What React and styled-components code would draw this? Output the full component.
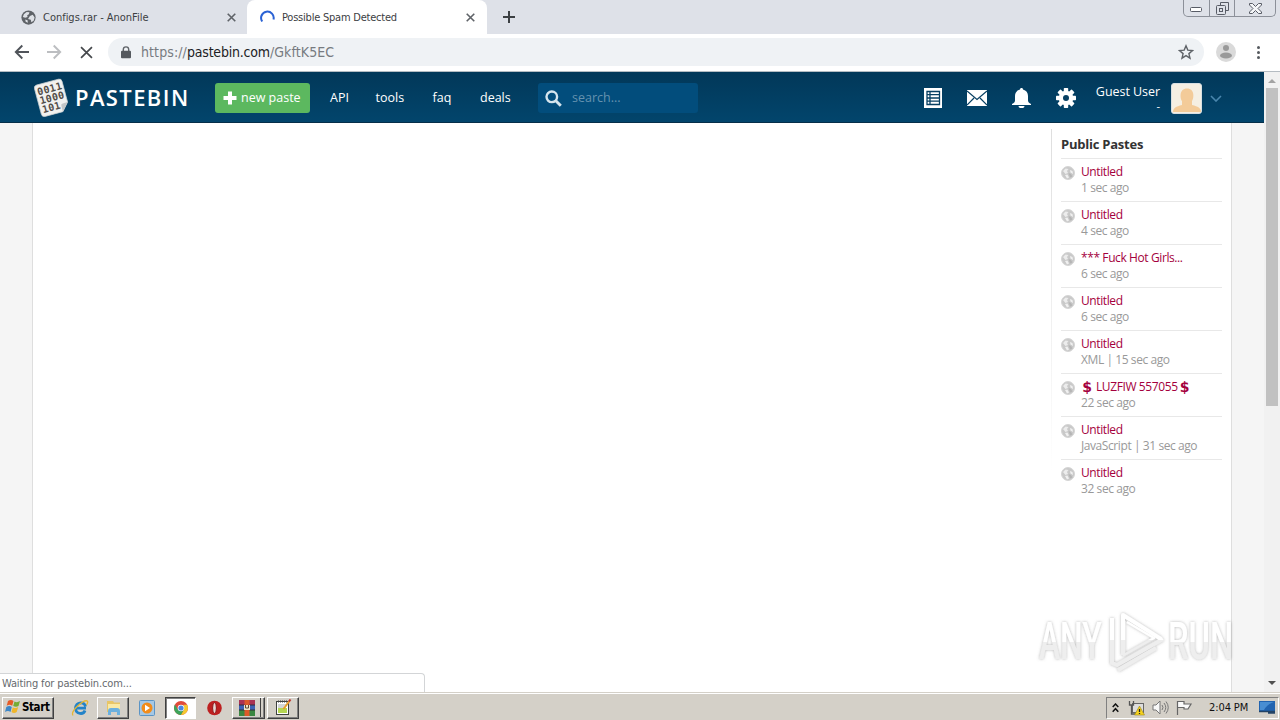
import React from 'react';
import styled, { createGlobalStyle } from 'styled-components';

const pastes = [
  { title: 'Untitled', info: '1 sec ago' },
  { title: 'Untitled', info: '4 sec ago' },
  { title: '*** Fuck Hot Girls...', info: '6 sec ago' },
  { title: 'Untitled', info: '6 sec ago' },
  { title: 'Untitled', info: 'XML | 15 sec ago' },
  { title: 'LUZFIW 557055', info: '22 sec ago', money: true },
  { title: 'Untitled', info: 'JavaScript | 31 sec ago' },
  { title: 'Untitled', info: '32 sec ago' },
];

const Globe = ({ size, color, land }) => (
  <svg width={size} height={size} viewBox="0 0 16 16">
    <circle cx="8" cy="8" r="7.6" fill={color} />
    <path d="M3 4.5 6 2l3 .4-.6 2L6.600 5.500l.4 2-2.500.8L2 7.500zM9.500 6.500l3-1.500 2 3-1 3.500-2.500 1.500-.5-2.500-3-1zM4.500 10l2.500 1 .3 2.600L5 12.600z" fill={land} />
  </svg>
);

const PublicGlobe = () => (
  <svg width="14" height="14" viewBox="0 0 14 14">
    <circle cx="7" cy="7" r="6.500" fill="#c9c9c9" stroke="#d6d6d6" />
    <path d="M2 5 4.500 2.500l3 .5L6 5l1 2-2.500 1z" fill="#ececec" />
    <path d="m4 9 2.500-.5 1.500 3-2 1zM9 4l2.500 1 .5 3-2.500-1.500z" fill="#f0f0f0" />
    <path d="m7.500 7 2.500 1 1.500 2.500-2.500 1z" fill="#b5b5b5" />
  </svg>
);

const CloseIcon = ({ size = 9, width = 1.8, color = '#5f6368' }) => (
  <svg width={size} height={size} viewBox="0 0 10 10">
    <path d="M.8.8 9.200 9.200M9.200.8.8 9.200" stroke={color} strokeWidth={width} />
  </svg>
);

const Logo = () => (
  <svg width="36" height="40" viewBox="0 0 36 40">
    <g transform="rotate(-15 18 20)">
      <path d="M6.500 3.500h22.500a3 3 0 0 1 3 3v21.500l-7 8H6.500a3 3 0 0 1-3-3V6.500a3 3 0 0 1 3-3z" fill="#f1f1ef" stroke="#c9d0d3" strokeWidth=".7" />
      <path d="m32 28-7 8v-6a2 2 0 0 1 2-2z" fill="#c3c6c7" />
      <g fontFamily="DejaVu Sans Mono, monospace" fontWeight="700" fontSize="10" fill="#514c47">
        <text x="5.500" y="14" textLength="25">0011</text>
        <text x="5.500" y="23.200" textLength="25">1000</text>
        <text x="5.500" y="32.400" textLength="18.500">101</text>
      </g>
    </g>
  </svg>
);

const Watermark = () => (
  <svg width="200" height="68" viewBox="0 0 200 68">
    <defs>
      <linearGradient id="mark" gradientUnits="userSpaceOnUse" x1="0" y1="0" x2="0" y2="68">
        <stop offset=".48" stopColor="#fff" />
        <stop offset=".48" stopColor="#eee" />
      </linearGradient>
      <linearGradient id="letters" x1="0" y1="0" x2="0" y2="1">
        <stop offset=".53" stopColor="#fff" />
        <stop offset=".53" stopColor="#eee" />
      </linearGradient>
      <filter id="glow" x="-10%" y="-10%" width="120%" height="120%">
        <feDropShadow dx="0" dy="0" stdDeviation="1.600" floodColor="#777" floodOpacity=".55" />
      </filter>
    </defs>
    <g filter="url(#glow)">
      <g fill="url(#letters)" fontFamily="Roboto, sans-serif" fontWeight="500" fontSize="51">
        <text transform="translate(3 51.500) scale(.64 1)" textLength="98" lengthAdjust="spacingAndGlyphs">ANY</text>
        <text transform="translate(132 51.500) scale(.64 1)" textLength="102" lengthAdjust="spacingAndGlyphs">RUN</text>
      </g>
      <g fill="none" stroke="url(#mark)" strokeWidth="4" strokeLinejoin="round">
        <path d="M87 48V8l38 24" />
        <path d="M76 11v45l5 2 46-26" />
        <path d="M88 14v34l30-17L91 15" strokeWidth="2.500" />
        <path d="m82 63 38-22" />
      </g>
    </g>
  </svg>
);

const App = () => (
  <Screen>
    <GlobalStyle />
    <TabStrip>
      <Tab $width={247}>
        <Globe size={15} color="#5f6368" land="#dee1e6" />
        <TabTitle $spacing="-0.02px">Configs.rar - AnonFile</TabTitle>
        <CloseIcon />
      </Tab>
      <Tab $width={240} $active>
        <svg width="15" height="15" viewBox="0 0 15 15">
          <path d="M2.200 11.500A6.300 6.300 0 1 1 13.500 9.500" fill="none" stroke="#2a62d4" strokeWidth="2" />
        </svg>
        <TabTitle $spacing="-0.22px">Possible Spam Detected</TabTitle>
        <CloseIcon />
      </Tab>
      <NewTab>
        <svg width="12" height="12" viewBox="0 0 12 12"><path d="M6 0v12M0 6h12" stroke="#3c4043" strokeWidth="2" /></svg>
      </NewTab>
      <WindowControls>
        <ControlButton $width={25}>
          <svg width="13" height="6"><rect x=".5" y=".5" width="11" height="4" rx="1" fill="#fff" stroke="#585c66" /></svg>
        </ControlButton>
        <ControlButton $width={25}>
          <svg width="13" height="13" fill="none" stroke="#585c66"><path d="M4.500 3.500v-3h8v8h-3" /><rect x=".5" y="3.500" width="9" height="9" rx="1" /><rect x="3.500" y="6.500" width="3" height="3" /></svg>
        </ControlButton>
        <ControlButton $width={41}>
          <svg width="13" height="11" viewBox="0 0 13 11"><path d="M.5.5h3l3 3 3-3h3v1.500L9 5.500l3.500 3.500v1.500h-3l-3-3-3 3h-3V9L4 5.500.5 2z" fill="#f5f6f8" stroke="#585c66" /></svg>
        </ControlButton>
      </WindowControls>
    </TabStrip>

    <Toolbar>
      <ToolIcon>
        <svg width="16" height="16" viewBox="0 0 16 16" fill="none" stroke="#50545a" strokeWidth="1.900"><path d="M15 8H2M8.300 1.500 1.800 8l6.500 6.500" /></svg>
      </ToolIcon>
      <ToolIcon>
        <svg width="16" height="16" viewBox="0 0 16 16" fill="none" stroke="#bcbec1" strokeWidth="1.900"><path d="M1 8h13M7.700 1.500 14.200 8l-6.500 6.500" /></svg>
      </ToolIcon>
      <ToolIcon><CloseIcon size={13} width={1.3} color="#45484c" /></ToolIcon>
      <AddressBar>
        <svg width="10" height="13" viewBox="0 0 10 13"><path d="M2.300 6V3.600a2.700 2.700 0 0 1 5.400 0V6" fill="none" stroke="#5f6368" strokeWidth="1.400" /><rect y="4.700" width="10" height="7.600" rx="1" fill="#55595e" /></svg>
        <Url>https://<b>pastebin.com</b>/GkftK5EC</Url>
        <svg width="16" height="16" viewBox="0 0 16 16"><path d="m8 1.800 1.800 4.300 4.700.4-3.600 3.100L12 14.200l-4-2.500-4 2.500 1.100-4.600-3.600-3.100 4.700-.4z" fill="none" stroke="#5f6368" strokeWidth="1.400" /></svg>
      </AddressBar>
      <svg width="20" height="20" viewBox="0 0 20 20"><circle cx="10" cy="10" r="10" fill="#dadada" /><circle cx="10" cy="6" r="3" fill="#999" /><ellipse cx="10" cy="13.500" rx="6" ry="3" fill="#999" /></svg>
      <Dots><i /><i /><i /></Dots>
    </Toolbar>

    <Viewport>
      <Page>
        <SiteHeader>
          <Logo />
          <Brand>PASTEBIN</Brand>
          <NewPaste>
            <svg width="14" height="14" viewBox="0 0 14 14"><path d="M7 .5v13M.5 7h13" stroke="#fff" strokeWidth="4" /></svg>
            new paste
          </NewPaste>
          <NavLink $width={45.5}>API</NavLink>
          <NavLink $width={57}>tools</NavLink>
          <NavLink $width={47.5}>faq</NavLink>
          <NavLink $width={58}>deals</NavLink>
          <Search>
            <svg width="17" height="17" viewBox="0 0 17 17" fill="none" stroke="#d5e5ee"><circle cx="6.800" cy="6.800" r="5.300" strokeWidth="2.400" /><path d="m10.800 10.800 5 5" strokeWidth="2.900" /></svg>
            search...
          </Search>
          <HeaderIcons>
            <svg width="18" height="20" viewBox="0 0 18 20"><path d="M0 0h18v20H0z" fill="#fff" /><path d="M3 3.500h12.500v13H3zM3 6.700h12.500M3 10h12.500M3 13.200h12.500M6 3.500v13" fill="none" stroke="#073f62" strokeWidth="1.300" /></svg>
            <svg width="20" height="16" viewBox="0 0 20 16"><path d="M0 0h20v16H0z" fill="#fff" /><path d="m0 1 10 8.500L20 1M0 15l7-7M20 15l-7-7" fill="none" stroke="#073f62" strokeWidth="1.200" /></svg>
            <svg width="19" height="20" viewBox="0 0 19 20"><path d="M9.500 0c1 0 1.500.7 1.500 1.600 3.200.8 5 3.300 5 6.400v4.500c0 1.500 1 2.500 3 3.500v1H0v-1c2-1 3-2 3-3.500V8c0-3.100 1.800-5.600 5-6.400C8 .7 8.500 0 9.500 0zM6.500 18h6a3 2.200 0 0 1-6 0z" fill="#fff" /></svg>
            <svg width="20" height="20" viewBox="-10 -10 20 20" fill="#fff">
              {[0, 45, 90, 135].map((angle) => <rect key={angle} x="-2.200" y="-10" width="4.400" height="20" rx=".7" transform={`rotate(${angle})`} />)}
              <circle r="7.300" />
              <circle r="3" fill="#073f62" />
            </svg>
          </HeaderIcons>
          <User><span>Guest User</span><small>-</small></User>
          <Avatar>
            <svg width="28" height="28" viewBox="0 0 28 28"><path d="M0 28c0-4 3-5.500 9-7V17C7 14.500 6 4.500 14 4.500s7 10 5 12.500v4C25 22.500 28 24 28 28z" fill="#f3cb99" /></svg>
          </Avatar>
          <svg width="12" height="7" viewBox="0 0 12 7"><path d="m1 1 5 5 5-5" fill="none" stroke="#4a86ad" strokeWidth="1.600" /></svg>
        </SiteHeader>
        <Content>
          <Sidebar>
            <SidebarTitle>Public Pastes</SidebarTitle>
            {pastes.map((paste, i) => (
              <Paste key={i}>
                <PublicGlobe />
                <div>
                  <PasteTitle>
                    {paste.money && <Money>$</Money>}{paste.title}{paste.money && <Money $after>$</Money>}
                  </PasteTitle>
                  <PasteInfo>{paste.info}</PasteInfo>
                </div>
              </Paste>
            ))}
          </Sidebar>
        </Content>
      </Page>
      <Scrollbar>
        <Arrow $color="#a3a3a3" $up />
        <Thumb />
        <Arrow $color="#505050" />
      </Scrollbar>
      <Status>Waiting for pastebin.com...</Status>
      <WatermarkBox><Watermark /></WatermarkBox>
    </Viewport>

    <Taskbar>
      <Start>
        <svg width="16" height="15" viewBox="0 0 16 15"><path d="M3 2q3-2 5.500 0L7.200 6.700Q4.500 5 1.700 6.700z" fill="#e65b26" /><path d="M9.500 2.500Q12 4 15 2l-1.500 5Q11 8.500 8.200 7z" fill="#75ac35" /><path d="M1.300 8q3-2 5.500 0l-1.300 5Q3 11.200 0 13z" fill="#3c87c8" /><path d="M7.800 8.200Q10.500 10 13.200 8l-1.500 5Q9 14.800 6.500 13z" fill="#efb62b" /></svg>
        Start
      </Start>
      <TaskButton $width={32} $left={10} $flat>
        <svg width="18" height="18" viewBox="0 0 18 18" fill="none"><path d="M14.500 7.500C14 2.500 5 2.500 4.500 9.500c.5 6 8 6.500 9.500 2M5 9.200h10" stroke="#2383c8" strokeWidth="2.800" /><path d="M2 16.500C-1 12 12 1 16 1.800c1.200.5.7 2.200-.5 4" stroke="#e5b634" strokeWidth="1.300" /></svg>
      </TaskButton>
      <TaskButton $width={32} $left={1}>
        <svg width="17" height="17" viewBox="0 0 17 17"><path d="M2 2h6l1 1.500h6V13H2z" fill="#e8c565" /><path d="M3 5h12v7H3z" fill="#fae9a5" /><path d="M3 16v-4q0-3 3-3h6q3 0 3 3v4h-3v-3H6v3z" fill="#6bb0df" /></svg>
      </TaskButton>
      <TaskButton $width={32} $left={2} $flat>
        <svg width="16" height="16" viewBox="0 0 16 16"><rect x=".5" y=".5" width="15" height="15" rx="1" fill="#a5c8e5" stroke="#5b94c5" /><circle cx="8" cy="8" r="5.500" fill="#f28c1a" /><path d="m6 4.700 5 3.300-5 3.300z" fill="#fff" /></svg>
      </TaskButton>
      <TaskButton $width={31} $left={2} $pressed>
        <svg width="14" height="14" viewBox="0 0 14 14"><circle cx="7" cy="7" r="7" fill="#e14b3b" /><path d="M.9 3.600A7 7 0 0 0 7 14l3-5.300L4 8.700z" fill="#3da45a" /><path d="M13.100 3.700A7 7 0 0 1 7 14l3-5.300-.5-5z" fill="#f5c92e" /><circle cx="7" cy="7" r="3.300" fill="#fff" /><circle cx="7" cy="7" r="2.600" fill="#4a86e0" /></svg>
      </TaskButton>
      <TaskButton $width={32} $left={2} $flat>
        <svg width="15" height="16" viewBox="0 0 15 16"><circle cx="7.500" cy="8" r="7.300" fill="#bd2020" /><ellipse cx="7.500" cy="8" rx="1.900" ry="5.300" fill="#e6d8d2" stroke="#8d1216" /></svg>
      </TaskButton>
      <TaskButton $width={33} $left={2} $stack>
        <svg width="16" height="16" viewBox="0 0 16 16"><path d="M0 0h16v5H0z" fill="#a93254" /><path d="M0 5h16v5H0z" fill="#3b61b5" /><path d="M0 10h16v6H0z" fill="#3b8742" /><path d="M0 5h16M0 10h16" stroke="#322c3a" /><path d="M5.500 0h5v16h-5z" fill="#dc5a2a" /><path d="M5 5h6v5H5z" fill="#ece4c8" /><path d="M6.500 5v3h3V5" stroke="#5d4a35" fill="none" /></svg>
      </TaskButton>
      <TaskButton $width={32} $left={2}>
        <svg width="17" height="17" viewBox="0 0 17 17"><rect x="1.500" y="2.500" width="12" height="13" fill="#fff" stroke="#3e413e" /><path d="M3 2.500h10" stroke="#444" strokeWidth="2" strokeDasharray="1 1" /><path d="M3 9h9v5H3z" fill="#b5d652" /><path d="M3 6h8M3 8h6" stroke="#a7adb0" /><path d="m8.500 10 6-8" stroke="#e79b27" strokeWidth="2" /><path d="m14 2.500 1.500-2" stroke="#bf302a" strokeWidth="2" /></svg>
      </TaskButton>
      <Tray>
        <svg width="7" height="10" viewBox="0 0 7 10"><path d="m.7 4 2.800-3 2.800 3M.7 8.700l2.800-3 2.800 3" fill="none" stroke="#111" strokeWidth="1.500" /></svg>
        <TrayIcons>
          <svg width="17" height="16" viewBox="0 0 17 16"><rect x="4.500" y="3.500" width="11" height="9" fill="#ddd" stroke="#666" /><path d="M1.500 1v4h4V1M3.500 5v9h7" fill="none" stroke="#555" strokeWidth="1.300" /><path d="m11.500 6 5 9h-10z" fill="#f6d21d" stroke="#9c861c" strokeWidth=".6" /><path d="M11.500 9v3m0 1v1" stroke="#222" strokeWidth="1.300" /></svg>
          <svg width="17" height="15" viewBox="0 0 17 15" fill="none" stroke="#777"><path d="M1 5h3l4-4v13l-4-4H1z" fill="#f8f8f8" /><path d="M10 5q2 2.500 0 5M12 3q3.500 4.500 0 9M14 1.500q4.500 6 0 12" /></svg>
          <svg width="17" height="15" viewBox="0 0 17 15"><path d="M1.500 15V1M2 1.500h6V4h7l-3 5H8V7.500H2" fill="#fafafa" stroke="#666" strokeWidth="1.200" /></svg>
        </TrayIcons>
        <Clock>2:04 PM</Clock>
        <svg width="17" height="13" viewBox="0 0 17 13"><path d="M0 0h16v10H0z" fill="#2264b0" /><path d="M1 1h14q-7 2-10 8H1z" fill="#498ed2" /><path d="M0 10.500h16M9 12h7" stroke="#244365" strokeWidth="1.400" /></svg>
      </Tray>
    </Taskbar>
  </Screen>
);

export default App;

const GlobalStyle = createGlobalStyle`
  * { box-sizing: border-box; }
  body { margin: 0; overflow: hidden; }
  svg { display: block; flex-shrink: 0; }
`;

const Screen = styled.div`
  display: flex;
  flex-direction: column;
  width: 1280px;
  height: 720px;
  background: #fff;
  font-family: "DejaVu Sans Condensed", "DejaVu Sans", sans-serif;
  white-space: nowrap;
`;

const TabStrip = styled.div`
  display: flex;
  height: 34px;
  background: #dee1e8;
`;

const Tab = styled.div`
  display: flex;
  align-items: center;
  width: ${(p) => p.$width}px;
  height: 34px;
  padding: 0 ${(p) => (p.$active ? 12 : 11)}px 0 ${(p) => (p.$active ? 13 : 21)}px;
  border-radius: 8px 8px 0 0;
  background: ${(p) => (p.$active ? '#fff' : 'transparent')};
`;

const TabTitle = styled.span`
  flex: 1;
  margin-left: 7px;
  color: #3c4043;
  font-size: 11px;
  letter-spacing: ${(p) => p.$spacing};
`;

const NewTab = styled.div`
  display: flex;
  align-items: center;
  padding-left: 16px;
`;

const WindowControls = styled.div`
  display: flex;
  height: 17px;
  margin: 0 4px 0 auto;
  border: 1px solid #8c9099;
  border-top: 0;
  border-radius: 0 0 5px 5px;
`;

const ControlButton = styled.div`
  display: flex;
  align-items: center;
  justify-content: center;
  width: ${(p) => p.$width}px;
  & + & { border-left: 1px solid #8c9099; }
  &:first-child { padding-top: 4px; }
`;

const Toolbar = styled.div`
  display: flex;
  align-items: center;
  height: 38px;
  padding: 0 0 1px 6px;
  border-bottom: 1px solid #b5bcc2;
`;

const ToolIcon = styled.div`
  display: flex;
  justify-content: center;
  width: 32px;
`;

const AddressBar = styled.div`
  display: flex;
  align-items: center;
  width: 1096px;
  height: 28px;
  margin: 0 12px 0 6px;
  padding: 0 10px 0 13px;
  border-radius: 14px;
  background: #eff2f5;
`;

const Url = styled.div`
  flex: 1;
  margin-left: 10px;
  color: #777b80;
  font-size: 14px;
  letter-spacing: 0.1px;
  b {
    color: #202124;
    font-weight: 400;
    letter-spacing: -0.2px;
  }
`;

const Dots = styled.div`
  display: grid;
  gap: 2px;
  margin-left: 21px;
  i {
    width: 3px;
    height: 3px;
    border-radius: 50%;
    background: #55595e;
  }
`;

const Viewport = styled.div`
  position: relative;
  display: flex;
  height: 620px;
`;

const Page = styled.div`
  display: flex;
  flex-direction: column;
  width: 1264px;
  background: #f5f5f5;
`;

const SiteHeader = styled.header`
  display: flex;
  align-items: center;
  height: 51px;
  padding: 2px 0 0 34px;
  border-bottom: 1px solid #062f49;
  background: linear-gradient(#023859, #02456c);
  color: #fff;
  font-family: "Open Sans", "Noto Sans", sans-serif;
  font-size: 12.5px;
  line-height: 16px;
`;

const Brand = styled.div`
  width: 134px;
  margin-left: 5px;
  padding-bottom: 2px;
  font-size: 22px;
  font-weight: 600;
  letter-spacing: 1.4px;
`;

const NewPaste = styled.div`
  display: flex;
  align-items: center;
  gap: 4px;
  width: 95px;
  height: 30px;
  margin: 0 20px 0 6px;
  padding: 0 0 1px 8px;
  border-radius: 3px;
  background: #5cb85f;
`;

const NavLink = styled.a`
  width: ${(p) => p.$width}px;
  padding-bottom: 1px;
`;

const Search = styled.div`
  display: flex;
  align-items: center;
  gap: 10px;
  width: 160px;
  height: 30px;
  padding-left: 7px;
  border-radius: 3px;
  background: #024d7c;
  color: #6592af;
`;

const HeaderIcons = styled.div`
  display: flex;
  align-items: center;
  gap: 25px;
  margin-left: 226px;
`;

const User = styled.div`
  display: flex;
  flex-direction: column;
  align-items: flex-end;
  width: 84px;
  line-height: 15px;
  letter-spacing: -0.05px;
  small { font-size: 11px; line-height: 13px; }
`;

const Avatar = styled.div`
  display: flex;
  align-items: flex-end;
  justify-content: center;
  width: 31px;
  height: 31px;
  margin: 0 8px 0 11px;
  padding-bottom: 1px;
  border: 1px solid #d8dfe2;
  border-radius: 3px;
  background: #f5efe3;
`;

const Content = styled.main`
  display: flex;
  justify-content: flex-end;
  flex: 1;
  width: 1200px;
  margin-left: 32px;
  padding: 6px 9px 0 0;
  border: 1px solid #dedede;
  border-width: 0 1px;
  background: #fff;
`;

const Sidebar = styled.aside`
  width: 171px;
  height: 344px;
  padding: 0 0 0 9px;
  border-left: 1px solid;
  border-image: linear-gradient(#dedede, #f5f5f5 70%, #fff) 1;
  font-family: "Open Sans", "Noto Sans", sans-serif;
`;

const SidebarTitle = styled.h2`
  height: 29px;
  margin: 0;
  color: #333;
  font-size: 13px;
  font-weight: 700;
  line-height: 31px;
  letter-spacing: -0.23px;
`;

const Paste = styled.div`
  display: flex;
  gap: 6px;
  height: 43px;
  padding-top: 5px;
  border-top: 1px solid #e8e8e8;
  > svg { margin-top: 2px; }
`;

const PasteTitle = styled.div`
  display: flex;
  color: #a4003d;
  font-size: 12px;
  line-height: 16px;
  letter-spacing: -0.4px;
`;

const Money = styled.b`
  width: 12px;
  margin-left: ${(p) => (p.$after ? 1 : 0)}px;
  margin-right: ${(p) => (p.$after ? 0 : 3)}px;
  font-family: "DejaVu Sans", sans-serif;
  font-size: 14px;
  letter-spacing: 0;
  text-align: center;
`;

const PasteInfo = styled.div`
  color: #999;
  font-size: 12px;
  line-height: 16px;
  letter-spacing: -0.42px;
`;

const Scrollbar = styled.div`
  display: flex;
  flex-direction: column;
  align-items: center;
  justify-content: space-between;
  width: 16px;
  padding: 7px 0;
  background: #f1f1f1;
`;

const Arrow = styled.i`
  border: 4px solid transparent;
  border-top: ${(p) => (p.$up ? 0 : `4px solid ${p.$color}`)};
  border-bottom: ${(p) => (p.$up ? `4px solid ${p.$color}` : 0)};
`;

const Thumb = styled.div`
  width: 12px;
  height: 318px;
  margin: 5px 0 auto;
  background: #c1c1c1;
`;

const Status = styled.div`
  position: absolute;
  bottom: 0;
  left: 0;
  width: 425px;
  height: 19px;
  padding-left: 2px;
  border: 1px solid #d3d5d7;
  border-width: 1px 1px 0 0;
  border-radius: 0 4px 0 0;
  background: #fff;
  color: #666a6e;
  font-size: 11px;
  line-height: 19px;
  letter-spacing: -0.14px;
`;

const WatermarkBox = styled.div`
  position: absolute;
  top: 535px;
  left: 1036px;
`;

const Taskbar = styled.footer`
  display: flex;
  align-items: center;
  height: 28px;
  padding: 2px 1px 0 2px;
  border-top: 1px solid #d4d0c8;
  background: #d4d0c8;
  box-shadow: inset 0 1px #fff;
`;

const Start = styled.div`
  display: flex;
  align-items: center;
  gap: 1px;
  width: 52px;
  height: 22px;
  padding: 0 0 2px 2px;
  border: 1px solid;
  border-color: #fff #404040 #404040 #fff;
  box-shadow: inset -1px -1px #808080;
  font-size: 11.5px;
  font-weight: 700;
  letter-spacing: -0.4px;
`;

const TaskButton = styled.div`
  display: flex;
  align-items: center;
  justify-content: center;
  width: ${(p) => p.$width}px;
  height: 22px;
  margin-left: ${(p) => p.$left}px;
  padding-right: ${(p) => (p.$stack ? 4 : 0)}px;
  border: 1px solid;
  border-color: ${(p) => (p.$flat ? 'transparent' : p.$pressed ? '#404040 #fff #fff #404040' : '#fff #404040 #404040 #fff')};
  background: ${(p) => (p.$pressed ? '#fff' : 'transparent')};
  box-shadow: ${(p) => (p.$flat ? 'none' : p.$pressed ? 'inset 1px 1px #808080' : p.$stack ? 'inset -1px -1px #808080, inset -3px 0 #d4d0c8, inset -4px 0 #404040' : 'inset -1px -1px #808080')};
`;

const Tray = styled.div`
  display: flex;
  align-items: center;
  width: 173px;
  height: 22px;
  margin-left: auto;
  padding-left: 5px;
  border: 1px solid;
  border-color: #808080 #fff #fff #808080;
`;

const TrayIcons = styled.div`
  display: flex;
  align-items: center;
  gap: 7px;
  margin-left: 9px;
`;

const Clock = styled.span`
  width: 43px;
  margin: 0 7px 0 16px;
  color: #111;
  font-size: 11px;
  letter-spacing: -0.1px;
`;
